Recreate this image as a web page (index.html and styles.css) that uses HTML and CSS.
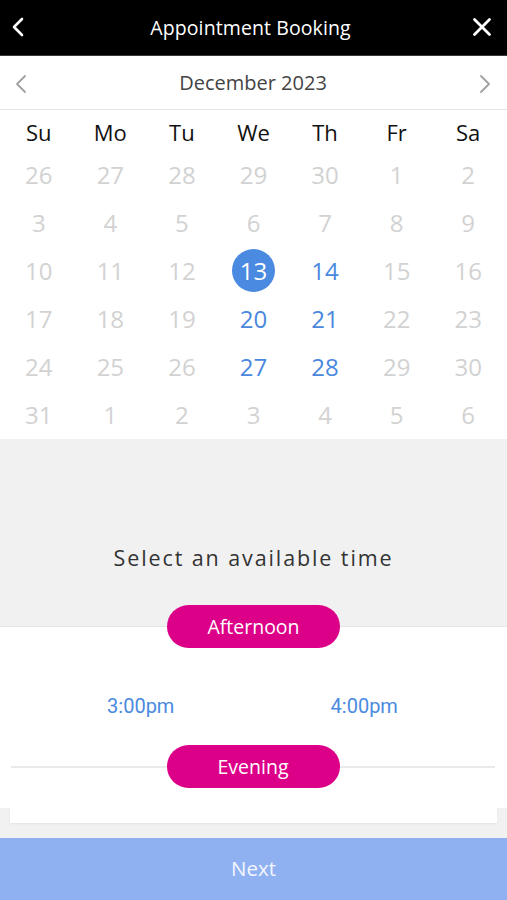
FILE: index.html
```html
<!DOCTYPE html>
<html lang="en">
<head>
<meta charset="utf-8">
<title>Appointment Booking</title>
<link rel="stylesheet" href="styles.css">
</head>
<body>
<div class="app">
  <header class="topbar">
    <button class="icon-btn back" aria-label="Back">
      <svg width="14" height="20" viewBox="0 0 14 20"><path d="M11 2 L3 10 L11 18" fill="none" stroke="#fff" stroke-width="2.6" stroke-linecap="round" stroke-linejoin="round"/></svg>
    </button>
    <h1 class="title">Appointment Booking</h1>
    <button class="icon-btn close" aria-label="Close">
      <svg width="20" height="20" viewBox="0 0 20 20"><path d="M2.5 2.5 L17.5 17.5 M17.5 2.5 L2.5 17.5" fill="none" stroke="#fff" stroke-width="2.8" stroke-linecap="round"/></svg>
    </button>
  </header>

  <div class="month-nav">
    <button class="icon-btn" aria-label="Previous month">
      <svg width="12" height="20" viewBox="0 0 12 20"><path d="M10 2 L2 10 L10 18" fill="none" stroke="#a0a0a0" stroke-width="1.8" stroke-linecap="round" stroke-linejoin="round"/></svg>
    </button>
    <div class="month">December 2023</div>
    <button class="icon-btn" aria-label="Next month">
      <svg width="12" height="20" viewBox="0 0 12 20"><path d="M2 2 L10 10 L2 18" fill="none" stroke="#a0a0a0" stroke-width="1.8" stroke-linecap="round" stroke-linejoin="round"/></svg>
    </button>
  </div>

  <div class="calendar">
    <div class="wd">Su</div><div class="wd">Mo</div><div class="wd">Tu</div><div class="wd">We</div><div class="wd">Th</div><div class="wd">Fr</div><div class="wd">Sa</div>

    <div class="d">26</div><div class="d">27</div><div class="d">28</div><div class="d">29</div><div class="d">30</div><div class="d">1</div><div class="d">2</div>
    <div class="d">3</div><div class="d">4</div><div class="d">5</div><div class="d">6</div><div class="d">7</div><div class="d">8</div><div class="d">9</div>
    <div class="d">10</div><div class="d">11</div><div class="d">12</div><div class="d sel"><span>13</span></div><div class="d av">14</div><div class="d">15</div><div class="d">16</div>
    <div class="d">17</div><div class="d">18</div><div class="d">19</div><div class="d av">20</div><div class="d av">21</div><div class="d">22</div><div class="d">23</div>
    <div class="d">24</div><div class="d">25</div><div class="d">26</div><div class="d av">27</div><div class="d av">28</div><div class="d">29</div><div class="d">30</div>
    <div class="d">31</div><div class="d">1</div><div class="d">2</div><div class="d">3</div><div class="d">4</div><div class="d">5</div><div class="d">6</div>
  </div>

  <section class="prompt">
    <p class="prompt-text">Select an available time</p>
  </section>

  <section class="slots">
    <div class="period first"><span class="pill">Afternoon</span></div>
    <div class="times">
      <span class="time">3:00pm</span>
      <span class="time">4:00pm</span>
    </div>
    <div class="period lined"><span class="pill">Evening</span></div>
  </section>
  <div class="card-foot"></div>

  <button class="next">Next</button>
</div>
</body>
</html>
```

FILE: styles.css
```css
* { box-sizing: border-box; }
html, body { margin: 0; padding: 0; }
body {
  background: #f1f1f1;
  font-family: "Open Sans", "Liberation Sans", sans-serif;
}
.app {
  width: 507px;
  height: 900px;
  display: flex;
  flex-direction: column;
  overflow: hidden;
}
.icon-btn {
  background: none;
  border: 0;
  padding: 0;
  display: flex;
  align-items: center;
  justify-content: center;
  cursor: pointer;
}
.topbar {
  height: 56px;
  background: #000;
  display: flex;
  align-items: center;
  justify-content: space-between;
  padding: 0 14px 0 10px;
  border-bottom: 1px solid #3a3a3a;
}
.topbar .back { width: 16px; height: 24px; margin-top: -2px; }
.topbar .close { width: 22px; height: 24px; margin-top: -2px; }
.title {
  margin: 0 0 0 4px;
  color: #fff;
  font-family: "Open Sans", sans-serif;
  font-weight: 400;
  font-size: 19.5px;
  letter-spacing: 0.1px;
  margin-top: -1px;
}
.month-nav {
  height: 54px;
  background: #fff;
  border-bottom: 1px solid #e4e4e4;
  display: flex;
  align-items: center;
  justify-content: space-between;
  padding: 0 16px 0 15px;
}
.month-nav .icon-btn { width: 12px; height: 24px; margin-top: 2px; }
.month {
  font-size: 20px;
  color: #444;
  margin-top: -1px;
}
.calendar {
  background: #fff;
  display: grid;
  grid-template-columns: repeat(7, 1fr);
  grid-template-rows: 40px repeat(6, 48px);
  padding: 0 3px 1px;
}
.wd, .d {
  display: flex;
  align-items: center;
  justify-content: center;
}
.wd {
  font-size: 22px;
  color: #111;
  padding-top: 3px;
}
.d {
  font-size: 24px;
  color: #d2d2d2;
}
.d.av { color: #4a88de; }
.d.sel span {
  width: 43px;
  height: 43px;
  border-radius: 50%;
  background: #4a8ae0;
  color: #fff;
  display: flex;
  align-items: center;
  justify-content: center;
}
.prompt {
  height: 187px;
  background: #f1f1f1;
  padding-top: 105px;
}
.prompt-text {
  margin: 0;
  text-align: center;
  font-size: 21.5px;
  line-height: 28px;
  letter-spacing: 1.9px;
  color: #333;
}
.slots {
  background: #fff;
  border-top: 1px solid #e6e6e6;
  padding-bottom: 20px;
}
.period {
  display: flex;
  justify-content: center;
}
.period.first { margin-top: -22px; }
.period.lined {
  margin: 27px 12px 0 11px;
  background: linear-gradient(#e9e9e9, #e9e9e9) no-repeat center / 100% 2px;
}
.pill {
  width: 173px;
  height: 43px;
  border-radius: 22px;
  background: #dc0088;
  color: #fff;
  font-size: 19.5px;
  display: flex;
  align-items: center;
  justify-content: center;
}
.times {
  display: grid;
  grid-template-columns: 1fr 1fr;
  padding: 0 31px 0 29px;
  margin-top: 46px;
}
.time {
  text-align: center;
  font-family: Roboto, "Liberation Sans", sans-serif;
  font-size: 20px;
  line-height: 24px;
  color: #4a8ae0;
}
.card-foot {
  height: 15px;
  margin: 0 10px 15px;
  background: #fff;
  box-shadow: 0 1px 2px rgba(0,0,0,0.06);
}
.next {
  height: 62px;
  border: 0;
  background: #8fb1f1;
  color: #f3f6ff;
  font-family: "Open Sans", sans-serif;
  font-size: 20.5px;
  padding: 0 0 2px;
  width: 100%;
}
```
